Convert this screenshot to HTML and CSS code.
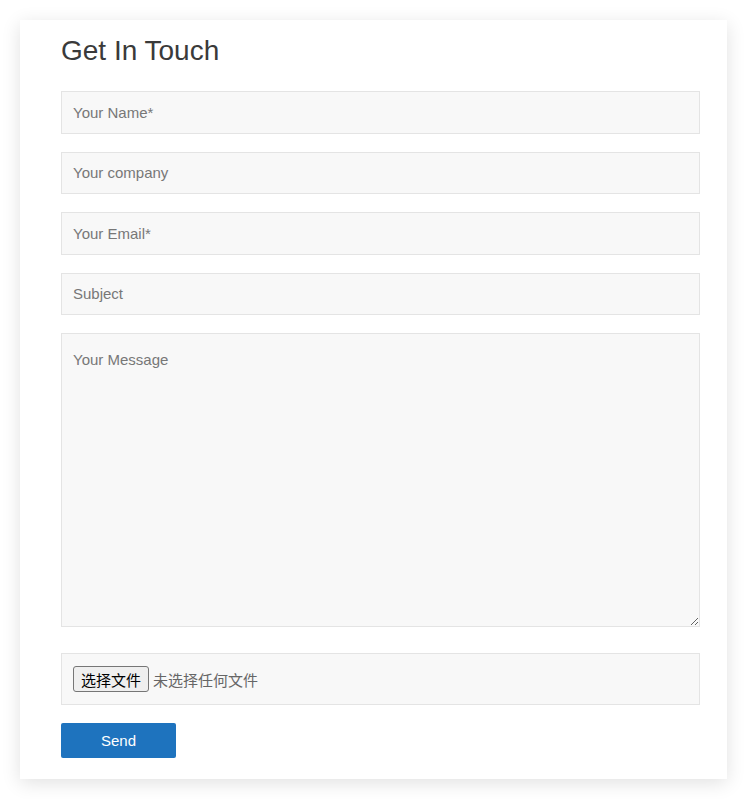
FILE: index.html
```html
<!DOCTYPE html>
<html>
<head>
<meta charset="utf-8">
<link rel="stylesheet" href="styles.css">
</head>
<body>
<div class="card">
  <h2 class="title">Get In Touch</h2>
  <form class="form">
    <input class="field" type="text" placeholder="Your Name*">
    <input class="field" type="text" placeholder="Your company">
    <input class="field" type="text" placeholder="Your Email*">
    <input class="field" type="text" placeholder="Subject">
    <textarea class="field area" placeholder="Your Message"></textarea>
    <div class="filebox">
      <span class="filebtn">选择文件</span>
      <span class="filetext">未选择任何文件</span>
    </div>
    <button class="send" type="button">Send</button>
  </form>
</div>
</body>
</html>
```
FILE: styles.css
```css
html, body {
  margin: 0;
  padding: 0;
  background: #fff;
}
body {
  padding: 20px 0 20px 20px;
  font-family: "Liberation Sans", Arial, sans-serif;
}
.card {
  width: 707px;
  height: 759px;
  box-sizing: border-box;
  background: #fff;
  box-shadow: 0 4px 18px rgba(0,0,0,0.12);
  padding: 15px 27px 0 41px;
}
.title {
  margin: 0;
  font-weight: normal;
  font-size: 28px;
  line-height: 32px;
  color: #3a3a3a;
}
.form {
  display: flex;
  flex-direction: column;
  margin-top: 24px;
}
.field {
  box-sizing: border-box;
  width: 639px;
  height: 42.5px;
  margin: 0 0 18px 0;
  padding: 0 11px;
  border: 1px solid #e4e4e4;
  border-radius: 0;
  background: #f8f8f8;
  font-family: "Liberation Sans", Arial, sans-serif;
  font-size: 15px;
  color: #333;
  outline: none;
}
.field::placeholder {
  color: #777;
}
.area {
  height: 294px;
  padding-top: 17px;
  resize: vertical;
  margin-bottom: 26px;
}
.filebox {
  box-sizing: border-box;
  width: 639px;
  height: 52px;
  border: 1px solid #e4e4e4;
  background: #f8f8f8;
  display: flex;
  align-items: center;
  padding: 0 11px;
  gap: 4px;
  font-family: "Liberation Sans", "Noto Sans CJK SC", sans-serif;
}
.filebtn {
  box-sizing: border-box;
  height: 26px;
  width: 76px;
  border: 1px solid #767676;
  border-radius: 3px;
  background: #efefef;
  color: #000;
  font-size: 15px;
  display: flex;
  align-items: center;
  justify-content: center;
}
.filetext {
  font-size: 15px;
  color: #666;
}
.send {
  margin-top: 18px;
  width: 115px;
  height: 35px;
  border: none;
  border-radius: 2px;
  background: #1e73be;
  color: #fff;
  font-family: "Liberation Sans", Arial, sans-serif;
  font-size: 15px;
  padding: 0;
}
```
